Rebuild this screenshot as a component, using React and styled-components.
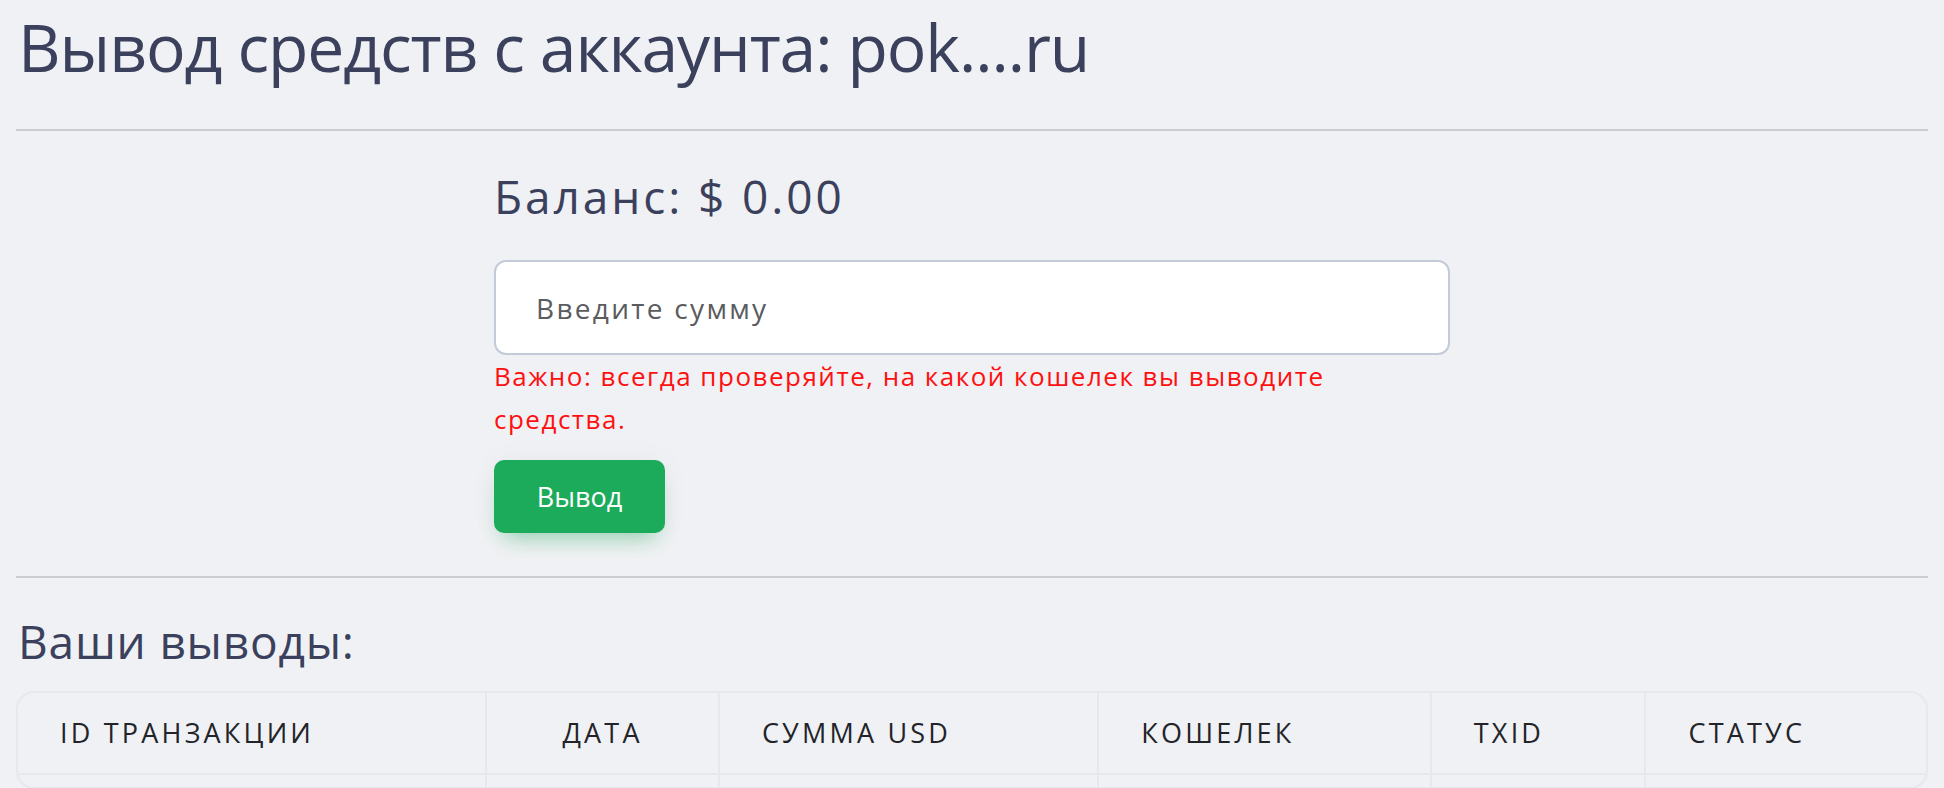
import React from 'react';
import styled, {createGlobalStyle} from 'styled-components';

const GlobalStyle = createGlobalStyle`
  html, body {
    margin: 0;
    padding: 0;
    background: #f0f1f4;
  }
  body {
    font-family: "Open Sans", "Noto Sans", sans-serif;
    color: #3b405d;
  }
  * {
    box-sizing: border-box;
  }
`;

const Page = styled.div`
  padding: 7px 16px 0;
`;

const Title = styled.h1`
  margin: 0;
  font-size: 66px;
  font-weight: 400;
  line-height: 1.2;
  letter-spacing: -1.1px;
  padding-left: 2px;
`;

const Rule = styled.hr`
  margin: ${(p) => p.$top}px 0 0;
  border: 0;
  height: 2px;
  background: #cbcdd3;
`;

const FormColumn = styled.div`
  margin-left: 25%;
  width: 50%;
  padding-top: 38px;
`;

const Balance = styled.h3`
  margin: 0;
  font-size: 46px;
  font-weight: 400;
  line-height: 1.2;
  letter-spacing: 2.9px;
`;

const AmountInput = styled.input`
  display: block;
  width: 100%;
  height: 95px;
  margin-top: 36px;
  padding: 0 40px;
  border: 2px solid #c3cbd8;
  border-radius: 12px;
  background: #fff;
  font-family: inherit;
  font-size: 28px;
  letter-spacing: 2.3px;
  color: #333;
  outline: none;

  &::placeholder {
    color: #5a5c60;
  }
`;

const Warning = styled.p`
  margin: 0;
  max-width: 900px;
  color: #ff1010;
  font-size: 26px;
  line-height: 43px;
  letter-spacing: 1.5px;
`;

const SubmitButton = styled.button`
  display: block;
  margin-top: 19px;
  width: 171px;
  height: 73px;
  border: 0;
  border-radius: 10px;
  background: #1bab5b;
  color: #fff;
  font-family: inherit;
  font-size: 27px;
  box-shadow: 0 14px 22px -10px rgba(27, 171, 91, 0.45),
    0 0 30px rgba(0, 0, 0, 0.04);
  cursor: pointer;
`;

const SectionTitle = styled.h3`
  margin: 36px 0 0;
  font-size: 46px;
  font-weight: 400;
  line-height: 1.2;
  letter-spacing: 0.8px;
  padding-left: 2px;
`;

const Table = styled.div`
  margin-top: 21px;
  display: grid;
  grid-template-columns: 470fr 233fr 380fr 333fr 215fr 280fr;
  border: 2px solid #e6e8ee;
  border-radius: 18px;
  overflow: hidden;
`;

const HeadCell = styled.div`
  height: 82px;
  display: flex;
  align-items: center;
  justify-content: ${(p) => (p.$center ? 'center' : 'flex-start')};
  padding: 0 42px;
  border-right: 2px solid #e6e8ee;
  border-bottom: 2px solid #e6e8ee;
  font-size: 27px;
  letter-spacing: 3.2px;
  color: #222429;
  text-transform: uppercase;

  &:nth-child(6n) {
    border-right: 0;
  }
`;

const BodyCell = styled.div`
  height: 12px;
  border-right: 2px solid #e6e8ee;

  &:nth-child(6n) {
    border-right: 0;
  }
`;

const columns = [
  {id: 'id', label: 'ID транзакции'},
  {id: 'date', label: 'Дата', center: true},
  {id: 'sum', label: 'Сумма USD'},
  {id: 'wallet', label: 'Кошелек'},
  {id: 'txid', label: 'TXID'},
  {id: 'status', label: 'Статус'},
];

const App = () => {
  return (
    <Page>
      <GlobalStyle />
      <Title>Вывод средств с аккаунта: pok....ru</Title>
      <Rule $top={43} />
      <FormColumn>
        <Balance>Баланс: $ 0.00</Balance>
        <AmountInput placeholder="Введите сумму" />
        <Warning>Важно: всегда проверяйте, на какой кошелек вы выводите средства.</Warning>
        <SubmitButton>Вывод</SubmitButton>
      </FormColumn>
      <Rule $top={43} />
      <SectionTitle>Ваши выводы:</SectionTitle>
      <Table>
        {columns.map(({id, label, center}) => (
          <HeadCell key={id} $center={center}>
            {label}
          </HeadCell>
        ))}
        {columns.map(({id}) => (
          <BodyCell key={`${id}-empty`} />
        ))}
      </Table>
    </Page>
  );
};

export default App;
